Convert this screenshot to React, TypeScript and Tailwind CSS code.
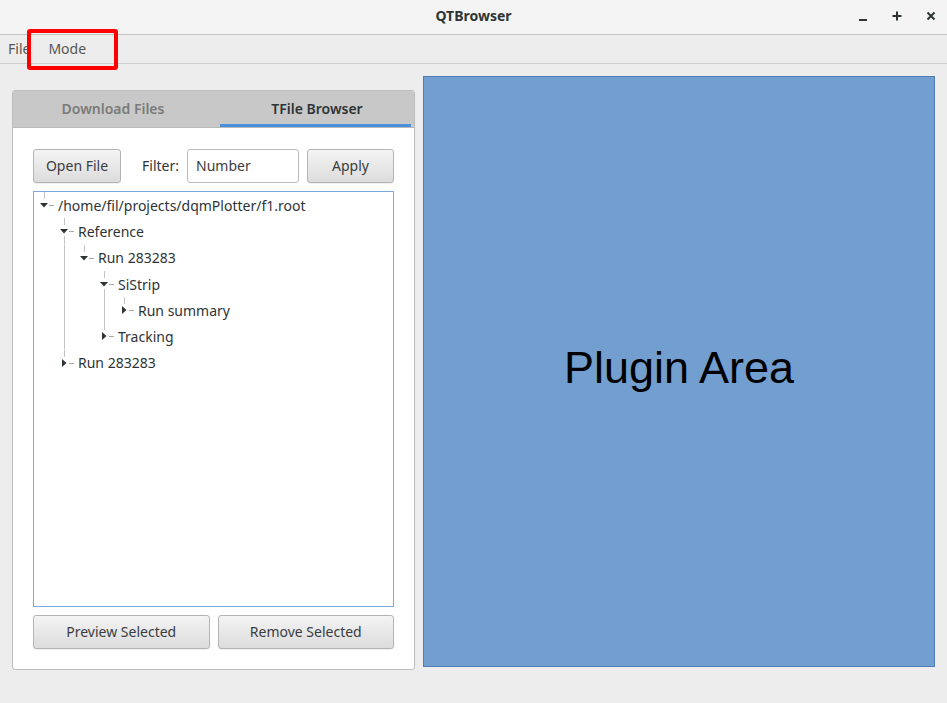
import React from 'react'

type Node = {
  label: string
  depth: number
  open: boolean
  next: boolean
  guides: number[]
}

const nodes: Node[] = [
  { label: '/home/fil/projects/dqmPlotter/f1.root', depth: 0, open: true, next: false, guides: [] },
  { label: 'Reference', depth: 1, open: true, next: true, guides: [] },
  { label: 'Run 283283', depth: 2, open: true, next: false, guides: [1] },
  { label: 'SiStrip', depth: 3, open: true, next: true, guides: [1] },
  { label: 'Run summary', depth: 4, open: false, next: false, guides: [1, 3] },
  { label: 'Tracking', depth: 3, open: false, next: false, guides: [1] },
  { label: 'Run 283283', depth: 1, open: false, next: false, guides: [] },
]

const col = (k: number) => 10 + 20 * k

const TreeRow = ({ node }: { node: Node }) => {
  const cx = col(node.depth)
  const cy = 13
  return (
    <div className="flex h-[26.3px] items-center">
      <svg width={20 * node.depth + 24} height={26.3} className="shrink-0">
        {node.guides.map((g) => (
          <line key={g} x1={col(g) + 0.5} y1={0} x2={col(g) + 0.5} y2={26.3} stroke="#c4c4c4" />
        ))}
        <line x1={cx + 0.5} y1={0} x2={cx + 0.5} y2={cy - 6} stroke="#c4c4c4" />
        {node.next && <line x1={cx + 0.5} y1={cy + 5} x2={cx + 0.5} y2={26.3} stroke="#c4c4c4" />}
        <line x1={cx + 5} y1={cy + 0.5} x2={cx + 10} y2={cy + 0.5} stroke="#a8a8a8" />
        {node.open ? (
          <polygon points={`${cx - 4},${cy - 2} ${cx + 4},${cy - 2} ${cx},${cy + 2.5}`} fill="#2e3436" />
        ) : (
          <polygon points={`${cx - 2},${cy - 4} ${cx + 2.5},${cy} ${cx - 2},${cy + 4}`} fill="#2e3436" />
        )}
      </svg>
      <span className="text-[14px] text-[#2e3436] whitespace-nowrap">{node.label}</span>
    </div>
  )
}

const Button = ({ children, className }: { children: React.ReactNode; className: string }) => (
  <button
    className={
      'h-[34px] rounded-[3px] border border-[#b4b4b4] bg-gradient-to-b from-[#f4f4f4] to-[#dcdcdc] pb-[2px] text-[14px] text-[#3a3d3e] shadow-[0_1px_0_rgba(0,0,0,0.06)] ' +
      className
    }
  >
    {children}
  </button>
)

export default function App() {
  return (
    <div
      className="relative flex h-[703px] w-[947px] flex-col overflow-hidden bg-[#ededed]"
      style={{ fontFamily: '"Noto Sans", "DejaVu Sans", sans-serif' }}
    >
      {/* title bar */}
      <div className="relative flex h-[35px] shrink-0 items-center justify-center border-b border-[#c2c2c2] bg-[#f4f4f4] pb-[4px]">
        <span className="text-[14px] font-bold text-[#2e3436]">QTBrowser</span>
        <div className="absolute right-0 top-0 flex h-[32px] items-center gap-[24px] pr-[11px]">
          <svg width="10" height="10" viewBox="0 0 10 10">
            <rect x="1" y="8" width="8" height="2" fill="#2e3436" />
          </svg>
          <svg width="10" height="10" viewBox="0 0 10 10">
            <rect x="0.5" y="4" width="9" height="2" fill="#2e3436" />
            <rect x="4" y="0.5" width="2" height="9" fill="#2e3436" />
          </svg>
          <svg width="10" height="10" viewBox="0 0 10 10">
            <path d="M1.5 1.5 L8.5 8.5 M8.5 1.5 L1.5 8.5" stroke="#2e3436" strokeWidth="2" />
          </svg>
        </div>
      </div>

      {/* menu bar */}
      <div className="flex h-[29px] shrink-0 items-center border-b border-[#cfcfcf] bg-[#ededed] pb-[2px] text-[14px] text-[#555753]">
        <span className="pl-[8px]">File</span>
        <span className="pl-[18px]">Mode</span>
      </div>

      {/* body */}
      <div className="flex flex-1 gap-[8px] px-[12px] pt-[12px]">
        <div className="mt-[14px] flex h-[580px] w-[403px] shrink-0 flex-col overflow-hidden rounded-[3px] border border-[#bdbdbd] bg-white">
          <div className="flex h-[37px] shrink-0 border-b border-[#b9b9b9] bg-[#c8c8c8] text-[14px] font-semibold">
            <div className="flex w-[200px] items-center justify-center pb-[2px] text-[#7b7b7b]">Download Files</div>
            <div className="ml-[7px] flex flex-1 flex-col">
              <div className="flex flex-1 items-center justify-center pt-[2px] text-[#2e3436]">TFile Browser</div>
              <div className="mr-[3px] h-[3px] bg-[#4a90d9]" />
            </div>
          </div>
          <div className="flex flex-1 flex-col gap-[8px] px-[20px] pt-[21px]">
            <div className="flex items-center">
              <Button className="w-[88px]">Open File</Button>
              <span className="ml-[21px] w-[45px] pb-[2px] text-[14px] text-[#2e3436]">Filter:</span>
              <div className="flex h-[34px] w-[112px] items-center rounded-[3px] border border-[#bcbcbc] bg-white pb-[2px] pl-[8px] text-[14px] text-[#3c3c3c]">
                Number
              </div>
              <Button className="ml-[8px] w-[87px]">Apply</Button>
            </div>
            <div className="h-[416px] overflow-hidden border border-[#7ca8dc] bg-white">
              {nodes.map((n, i) => (
                <TreeRow key={i} node={n} />
              ))}
            </div>
            <div className="flex gap-[8px]">
              <Button className="flex-1">Preview Selected</Button>
              <Button className="flex-1">Remove Selected</Button>
            </div>
          </div>
        </div>

        <div className="flex h-[591px] w-[512px] items-center justify-center border border-[#4f7dba] bg-[#729fcf]">
          <span
            className="-mt-[8px] text-[45px] text-black"
            style={{ fontFamily: '"Liberation Sans", Arial, sans-serif' }}
          >
            Plugin Area
          </span>
        </div>
      </div>

      {/* highlight box */}
      <div className="absolute left-[27px] top-[29px] h-[41px] w-[91px] rounded-[3px] border-[4px] border-[#ff0000]" />
    </div>
  )
}
